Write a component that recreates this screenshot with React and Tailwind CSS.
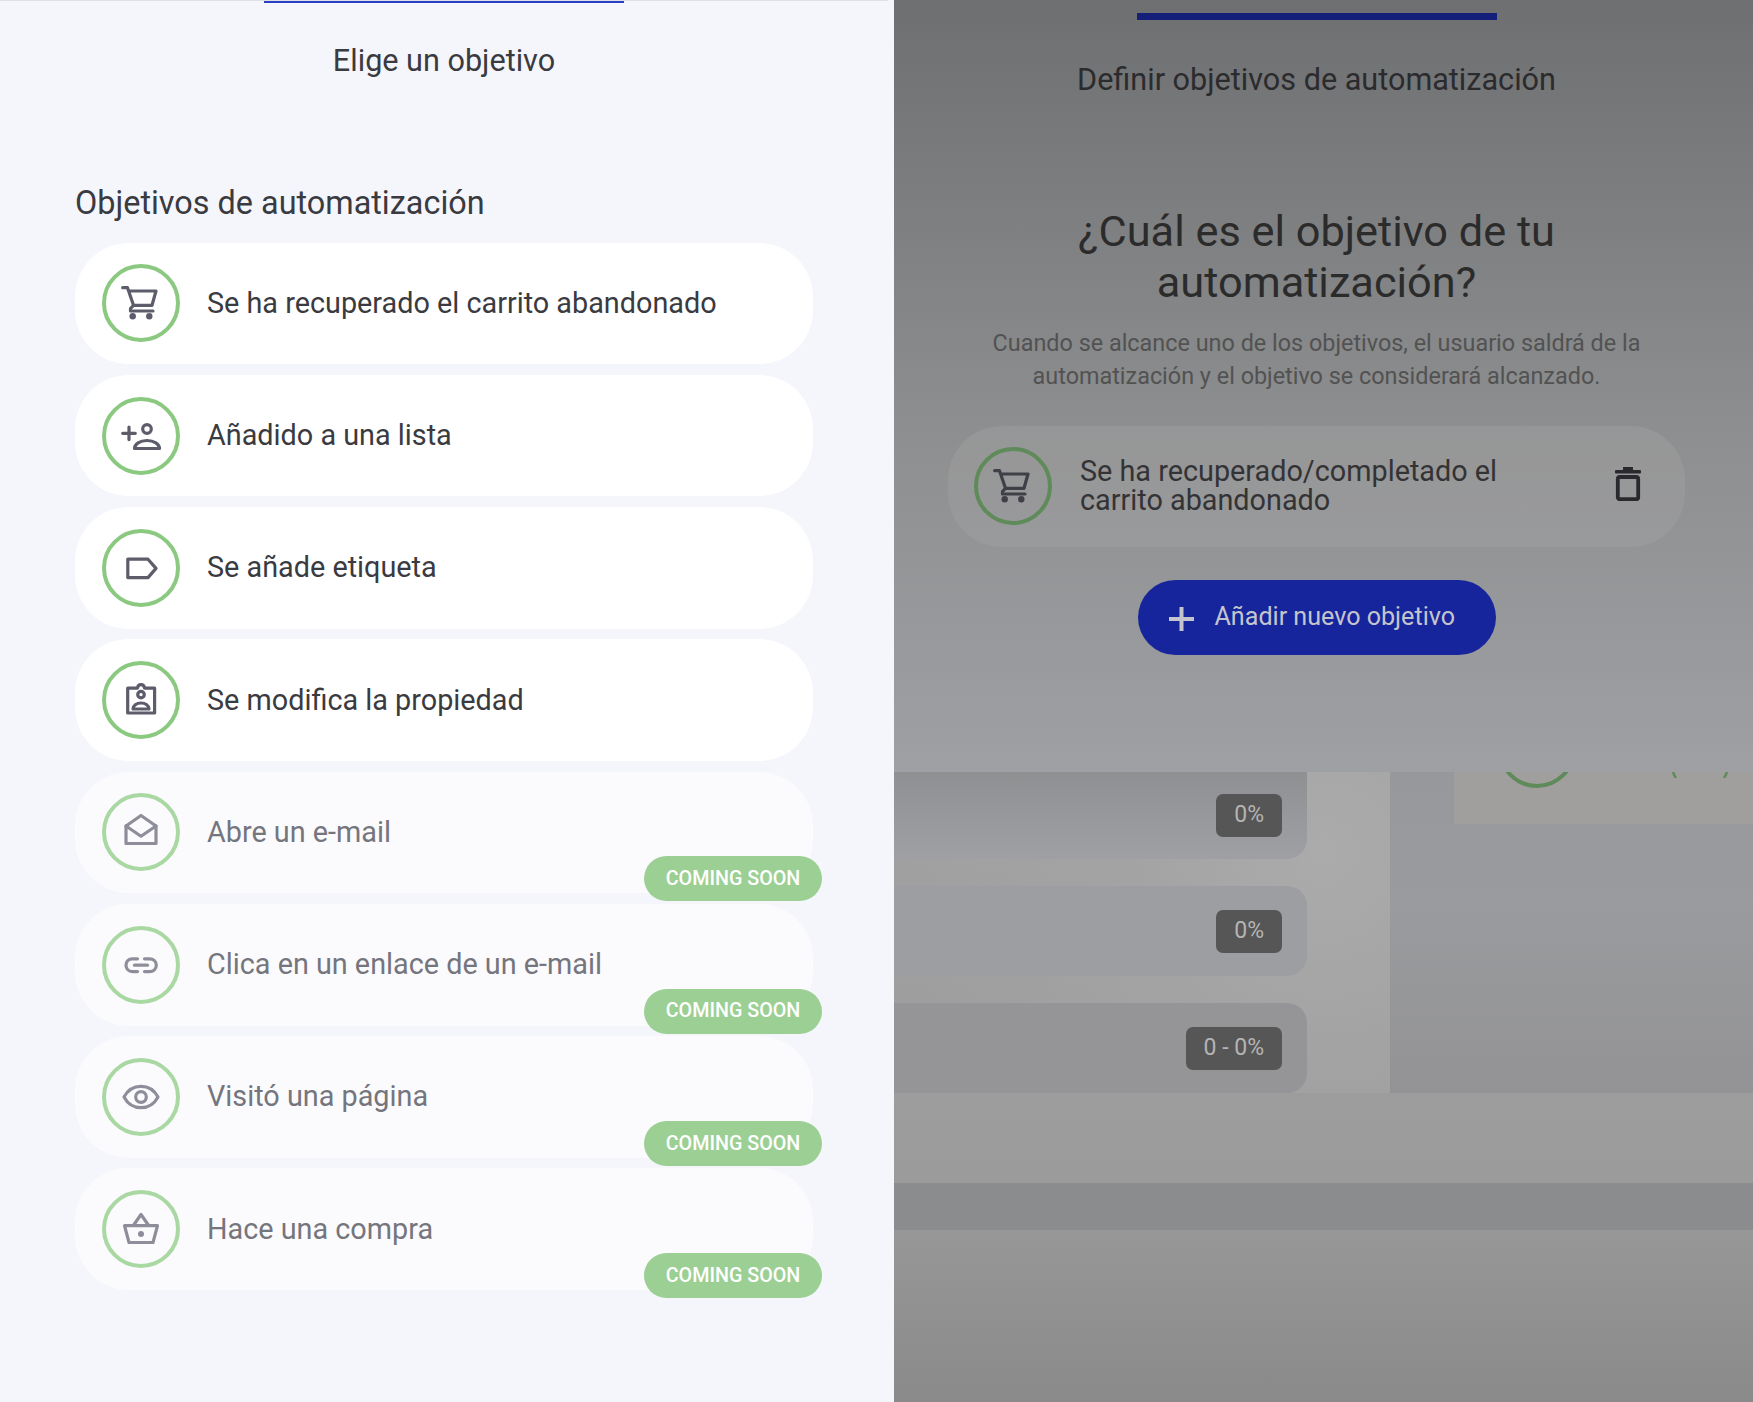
import React from 'react';

const CartIcon = () => (
  <>
    <path d="M5.7 8.7H10.5L16.5 26.3H35L39 12H11.5" />
    <path d="M16.5 26.3L13.5 29.5V32H36" />
    <circle cx="15.7" cy="37.3" r="3.2" fill="currentColor" stroke="none" />
    <circle cx="32.3" cy="37.3" r="3.2" fill="currentColor" stroke="none" />
  </>
);

const PersonAddIcon = () => (
  <>
    <path d="M12 15V27.6M5.7 21.3H18.3" />
    <circle cx="30" cy="17" r="4.3" />
    <path d="M17.5 36.5C17.5 32 23 28.5 30 28.5S42.5 32 42.5 36.5Z" />
  </>
);

const TagIcon = () => <path d="M10.8 15.2H31L39 24.4L31 33.6H10.8Z" />;

const BadgeIcon = () => (
  <>
    <path d="M10.7 12.2H20.5C21 7.5 27 7.5 27.5 12.2H37.6V37H10.7Z" />
    <circle cx="24" cy="18.6" r="3.3" />
    <path d="M16 33C16 29.5 19.5 27 24 27S32 29.5 32 33Z" />
  </>
);

const MailOpenIcon = () => (
  <>
    <path d="M9 18L24 7.5L39 18V35.5H9Z" />
    <path d="M9 18L24 28.2L39 18" />
  </>
);

const LinkIcon = () => (
  <>
    <path d="M20.5 17.8H15.5C11.5 17.8 9 20.6 9 24.2S11.5 30.6 15.5 30.6H20.5" />
    <path d="M27.5 17.8H32.5C36.5 17.8 39.3 20.6 39.3 24.2S36.5 30.6 32.5 30.6H27.5" />
    <path d="M17.5 24.2H30.5" />
  </>
);

const EyeIcon = () => (
  <>
    <path d="M7 24C11 16.5 17 13.3 24 13.3S37 16.5 41 24C37 31.5 31 34.7 24 34.7S11 31.5 7 24Z" />
    <circle cx="24" cy="24" r="5.3" />
  </>
);

const BasketIcon = () => (
  <>
    <path d="M7.5 20.7H40.5L36 37.5H12Z" />
    <path d="M16.7 20L24 9.5L31.3 20" />
    <circle cx="24" cy="29" r="3" fill="currentColor" stroke="none" />
  </>
);

const goals = [
  { icon: CartIcon, label: 'Se ha recuperado el carrito abandonado' },
  { icon: PersonAddIcon, label: 'Añadido a una lista' },
  { icon: TagIcon, label: 'Se añade etiqueta' },
  { icon: BadgeIcon, label: 'Se modifica la propiedad' },
  { icon: MailOpenIcon, label: 'Abre un e-mail', soon: true },
  { icon: LinkIcon, label: 'Clica en un enlace de un e-mail', soon: true },
  { icon: EyeIcon, label: 'Visitó una página', soon: true },
  { icon: BasketIcon, label: 'Hace una compra', soon: true },
];

const GoalIcon = ({ icon: Icon, ringClass, iconClass }) => (
  <div className={`w-[78px] h-[78px] shrink-0 rounded-full border-[4.5px] flex items-center justify-center ${ringClass}`}>
    <svg width="48" height="48" viewBox="0 0 48 48" fill="none" stroke="currentColor" strokeWidth="3.2" strokeLinejoin="round" strokeLinecap="round" className={`shrink-0 ${iconClass}`}>
      <Icon />
    </svg>
  </div>
);

const GoalRow = ({ icon, label, soon }) => (
  <div className={`relative h-[121.6px] rounded-[54px] pl-[27px] flex items-center gap-[27px] ${soon ? 'bg-[#fbfbfe]' : 'bg-white'}`}>
    <GoalIcon
      icon={icon}
      ringClass={soon ? 'border-[#a9d8a2]' : 'border-[#8bc981]'}
      iconClass={soon ? 'text-[#8e8e9a]' : 'text-[#5c5c6b]'}
    />
    <span className={`text-[28.8px] ${soon ? 'text-[#75757d]' : 'text-[#3a3a41]'}`}>{label}</span>
    {soon && (
      <span className="absolute right-[-9px] bottom-[-8px] w-[178px] h-[45px] rounded-full bg-[#9ccf94] text-white text-[19.7px] font-medium flex items-center justify-center">
        COMING SOON
      </span>
    )}
  </div>
);

const Pill = ({ value }) => (
  <span className="h-[43px] px-[18px] rounded-[7px] bg-[#565656] text-[#b4b4b4] text-[23px] flex items-center">{value}</span>
);

export default function App() {
  return (
    <div className="flex h-screen w-full overflow-hidden font-['Roboto',sans-serif]">
      {/* goal picker */}
      <aside className="w-[894px] shrink-0 bg-[#f5f6fb] flex flex-col pr-[6px]">
        <div className="border-t border-[#dfe0e6]">
          <div className="w-[360px] h-[1.5px] mx-auto bg-[#2b3fc4]" />
        </div>
        <h2 className="mt-[40px] text-center text-[#3a3a41] text-[30.6px] leading-[36px]">Elige un objetivo</h2>
        <div className="mt-[104px] pl-[75px] w-[813px]">
          <h3 className="text-[#3a3a41] text-[32.4px] leading-[40px]">Objetivos de automatización</h3>
          <div className="mt-[20px] flex flex-col gap-[10.7px]">
            {goals.map((g) => (
              <GoalRow key={g.label} {...g} />
            ))}
          </div>
        </div>
      </aside>

      {/* dimmed page behind the picker */}
      <main className="flex-1 flex flex-col bg-[linear-gradient(180deg,#a2a2a2_772px,#9b9b9b_1183px,#979797_1230px,#8a8a8a_1402px)]">
        <section className="h-[772px] pt-[13px] pr-[14px] flex flex-col items-center bg-[linear-gradient(180deg,#6e6f70_0%,#8d8e8f_55%,#9fa0a4_100%)]">
          <div className="w-[360px] h-[7px] bg-[#131f78]" />
          <h2 className="mt-[42px] text-[#2b2b2e] text-[30.6px] leading-[36px]">Definir objetivos de automatización</h2>
          <h1 className="mt-[108px] w-[600px] text-center text-[#2b2b2b] text-[43.3px] leading-[51px]">¿Cuál es el objetivo de tu automatización?</h1>
          <p className="mt-[18.5px] w-[700px] text-center text-[#525252] text-[23.4px] leading-[33px]">
            Cuando se alcance uno de los objetivos, el usuario saldrá de la automatización y el objetivo se considerará alcanzado.
          </p>
          <div className="mt-[33px] w-[737px] h-[121px] rounded-[54px] bg-[#a3a3a3]/40 pl-[26px] flex items-center text-[#333336]">
            <GoalIcon icon={CartIcon} ringClass="border-[#5f8a59]" iconClass="text-[#3f3f47]" />
            <span className="ml-[28px] w-[440px] text-[28.8px] leading-[29px]">Se ha recuperado/completado el carrito abandonado</span>
            <svg width="28" height="34" viewBox="0 0 28 34" className="ml-[94px] mt-[-4px] text-[#2a2a2e]" fill="currentColor">
              <rect x="9" y="0" width="10" height="3" />
              <rect x="1" y="3" width="26" height="3.4" rx="1" />
              <rect x="3.8" y="10" width="20.4" height="22.2" rx="2" fill="none" stroke="currentColor" strokeWidth="3.8" />
            </svg>
          </div>
          <button className="mt-[33px] w-[358px] h-[75px] rounded-full bg-[#17259c] text-[#c4c5cc] flex items-center pl-[31px]">
            <svg width="25" height="24" viewBox="0 0 25 24" stroke="currentColor" strokeWidth="4" className="mt-[4px]">
              <path d="M12.5 0V24M0 12H25" />
            </svg>
            <span className="ml-[21px] text-[25.1px]">Añadir nuevo objetivo</span>
          </button>
        </section>

        <section className="relative h-[321px] flex gap-[83px] bg-[radial-gradient(circle_at_430px_80px,#ababab_0%,#a3a3a3_40%,transparent_85%)]">
          <div className="w-[413px] flex flex-col gap-[27px]">
            <div className="h-[87px] rounded-br-[20px] bg-[linear-gradient(180deg,#8f9092_0%,#9fa0a4_100%)] flex items-center justify-end pr-[25px]">
              <Pill value="0%" />
            </div>
            <div className="h-[90px] rounded-r-[20px] bg-[#9d9ea2] flex items-center justify-end pr-[25px]">
              <Pill value="0%" />
            </div>
            <div className="h-[90px] rounded-r-[20px] bg-[#959597] flex items-center justify-end pr-[25px]">
              <Pill value="0 - 0%" />
            </div>
          </div>
          <div className="flex-1 flex justify-end bg-[linear-gradient(180deg,#97989c_0%,#9a9b9e_40%,#939395_100%)]">
            <div className="relative w-[299px] h-[52px] overflow-hidden bg-[#a09f9e]">
              <div className="absolute left-[44px] top-[-62px] w-[78px] h-[78px] rounded-full border-[4.5px] border-[#5f8a59]" />
              <svg width="58" height="6" viewBox="0 0 58 6" fill="none" stroke="#5f8a59" strokeWidth="2.5" className="absolute left-[217px] top-0">
                <path d="M2 0Q3 3 5 6M56 0Q55 3 53 6" />
              </svg>
            </div>
          </div>
        </section>

        <div className="mt-[90px] h-[47px] bg-[#8b8c8e]" />
      </main>
    </div>
  );
}
